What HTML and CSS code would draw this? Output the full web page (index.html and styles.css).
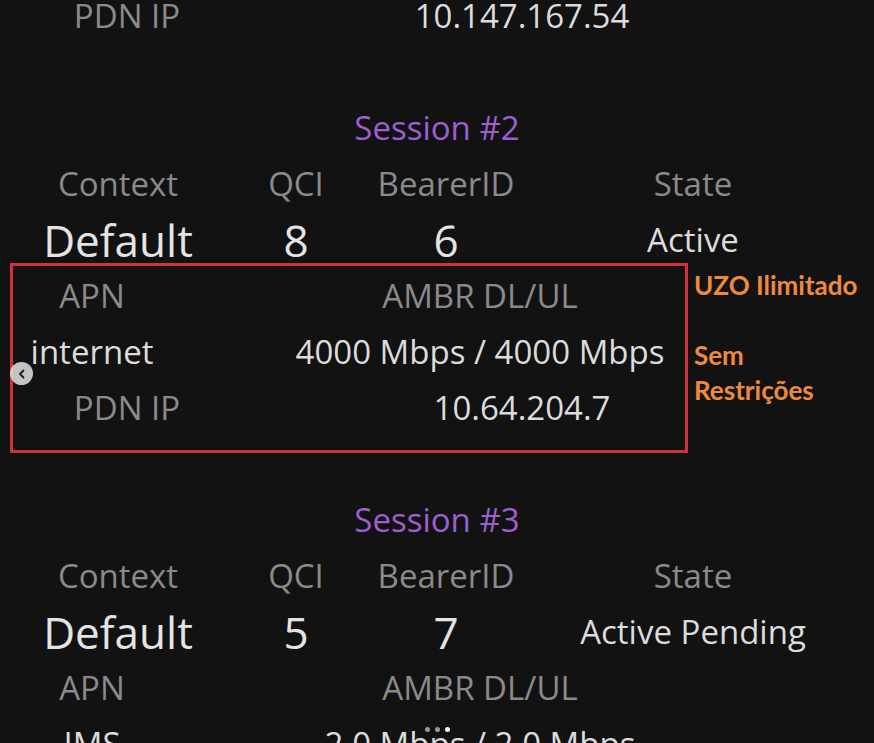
FILE: index.html
```html
<!DOCTYPE html>
<html lang="pt">
<head>
<meta charset="utf-8">
<title>Sessions</title>
<link rel="stylesheet" href="styles.css">
</head>
<body>
<div class="screen">
  <div class="row pdn first">
    <span class="label">PDN IP</span>
    <span class="value">10.147.167.54</span>
  </div>

  <section class="session s2">
    <h2 class="title">Session #2</h2>
    <div class="row quad">
      <span class="label">Context</span>
      <span class="label">QCI</span>
      <span class="label">BearerID</span>
      <span class="label">State</span>
    </div>
    <div class="row quad">
      <span class="big">Default</span>
      <span class="big">8</span>
      <span class="big">6</span>
      <span class="value">Active</span>
    </div>
    <div class="highlight">
      <div class="box">
        <div class="row apn">
          <span class="label">APN</span>
          <span class="label">AMBR DL/UL</span>
        </div>
        <div class="row apn">
          <span class="value">internet</span>
          <span class="value">4000 Mbps / 4000 Mbps</span>
        </div>
        <div class="row pdn">
          <span class="label">PDN IP</span>
          <span class="value">10.64.204.7</span>
        </div>
      </div>
      <div class="note">
        <p>UZO Ilimitado</p>
        <p class="gap">Sem<br>Restrições</p>
      </div>
    </div>
  </section>

  <section class="session s3">
    <h2 class="title">Session #3</h2>
    <div class="row quad">
      <span class="label">Context</span>
      <span class="label">QCI</span>
      <span class="label">BearerID</span>
      <span class="label">State</span>
    </div>
    <div class="row quad">
      <span class="big">Default</span>
      <span class="big">5</span>
      <span class="big">7</span>
      <span class="value">Active Pending</span>
    </div>
    <div class="row apn outer">
      <span class="label">APN</span>
      <span class="label">AMBR DL/UL</span>
    </div>
    <div class="row apn outer">
      <span class="value">IMS</span>
      <span class="value">2.0 Mbps / 2.0 Mbps</span>
    </div>
  </section>

  <button class="nav-prev" aria-label="Anterior">
    <svg width="10" height="10" viewBox="0 0 10 10"><path d="M6.5 1.5 L3 5 L6.5 8.5" fill="none" stroke="#1a1a1a" stroke-width="1.8" stroke-linecap="round" stroke-linejoin="round"/></svg>
  </button>
  <div class="dots">
    <span class="dot"></span><span class="dot"></span><span class="dot on"></span>
  </div>
</div>
</body>
</html>
```
FILE: styles.css
```css
html, body {
  margin: 0;
  padding: 0;
  background: #121212;
}
.screen {
  position: relative;
  width: 874px;
  height: 743px;
  overflow: hidden;
  background: #121212;
  font-family: "Open Sans", "DejaVu Sans", sans-serif;
  font-size: 33px;
}
.row {
  display: grid;
  height: 56px;
  line-height: 56px;
  text-align: center;
  white-space: nowrap;
}
.row.first {
  margin-top: -12px;
}
.label { color: #8a8a8a; }
.value { color: #dcdcdc; }
.big { color: #e4e4e4; font-size: 44px; }

.quad { grid-template-columns: 236px 120px 180px 314px; }
.pdn { grid-template-columns: 254px 536px; }
.apn.outer { grid-template-columns: 184px 592px; }

.title {
  margin: 56px 0 0;
  height: 56px;
  line-height: 56px;
  font-weight: 400;
  font-size: 33px;
  color: #9d5fd0;
  text-align: center;
}
.s3 .title { margin-top: 39px; }

.highlight {
  display: flex;
  align-items: flex-start;
  margin-top: -5px;
}
.box {
  margin-left: 10px;
  width: 672px;
  border: 3px solid #d3303b;
  padding: 2px 0 14px;
}
.box .apn { grid-template-columns: 158px 618px; }
.box .pdn { grid-template-columns: 228px 562px; }

.note {
  margin-left: 6px;
  padding-top: 5px;
  font-family: "Lato", "Open Sans", sans-serif;
  font-weight: 700;
  font-size: 26px;
  line-height: 35px;
  color: #ee8a3e;
}
.note p { margin: 0; }
.note .gap { margin-top: 35px; }

.nav-prev {
  position: absolute;
  left: 10px;
  top: 362px;
  width: 23px;
  height: 23px;
  padding: 0;
  border: 0;
  border-radius: 50%;
  background: rgba(220, 220, 220, 0.88);
  display: flex;
  align-items: center;
  justify-content: center;
}
.dots {
  position: absolute;
  left: 425px;
  top: 727px;
  display: flex;
  gap: 5px;
}
.dot {
  width: 5px;
  height: 5px;
  border-radius: 50%;
  background: #9a9a9a;
}
.dot.on { background: #ffffff; }
```
